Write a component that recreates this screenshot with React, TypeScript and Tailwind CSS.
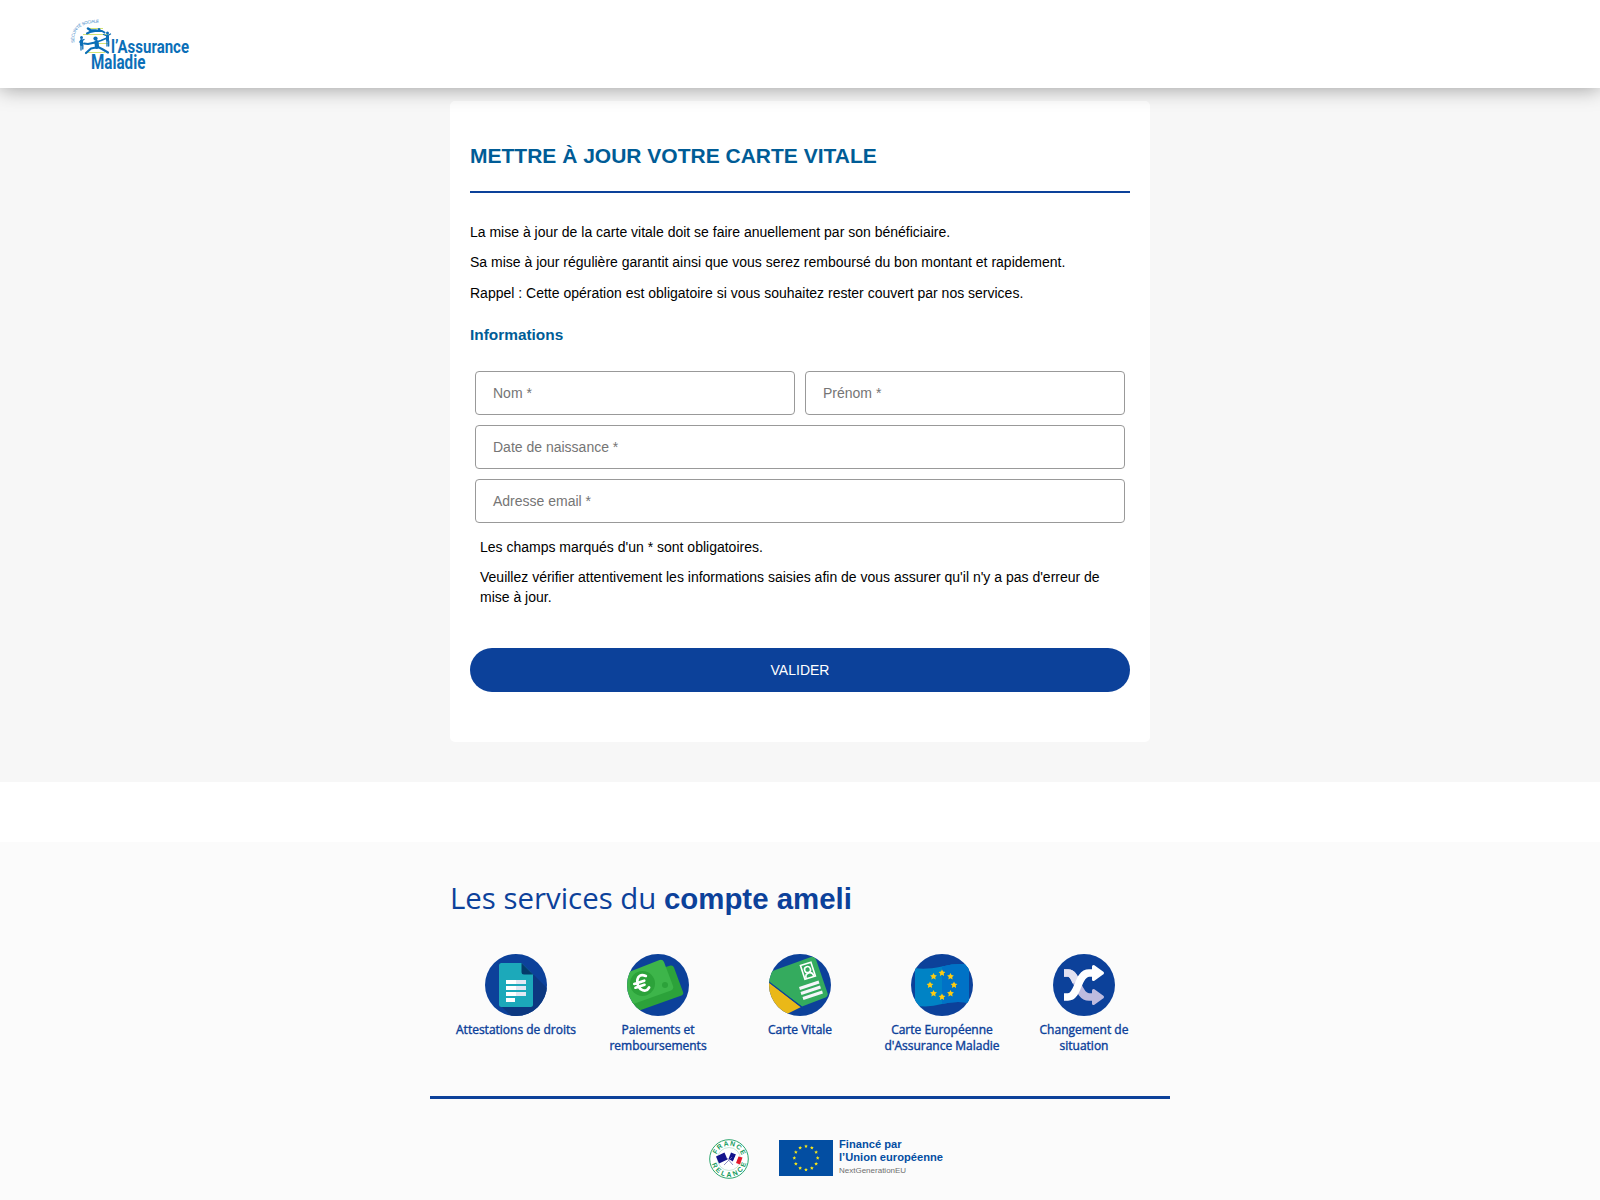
import type { ReactNode } from 'react';

function starPoints(cx: number, cy: number, r: number) {
  return Array.from({ length: 10 }, (_, i) => {
    const a = (Math.PI * i) / 5 - Math.PI / 2;
    const d = i % 2 ? r * 0.5 : r;
    return `${(cx + d * Math.cos(a)).toFixed(2)},${(cy + d * Math.sin(a)).toFixed(2)}`;
  }).join(' ');
}

function Stars({ n, cx, cy, ring, r, fill }: { n: number; cx: number; cy: number; ring: number; r: number; fill: string }) {
  return (
    <g fill={fill}>
      {Array.from({ length: n }, (_, i) => {
        const a = (2 * Math.PI * i) / n - Math.PI / 2;
        return <polygon key={i} points={starPoints(cx + ring * Math.cos(a), cy + ring * Math.sin(a), r)} />;
      })}
    </g>
  );
}

function Logo() {
  return (
    <svg className="ml-[68px] h-[60px] w-[126px]" viewBox="68 14 126 60">
      <defs>
        <path id="logo-arc" d="M74.6 42.5 C72.500 31 80 21.500 101 22.800" />
      </defs>
      <text fill="#3a86c8" fontSize="4.3" fontFamily="Liberation Sans, sans-serif">
        <textPath href="#logo-arc" textLength="37">SÉCURITÉ SOCIALE</textPath>
      </text>
      <g stroke="#c9dc52" strokeWidth="0.8" fill="none">
        <path d="M88 28.5H103M83 34.5H108M83 43.500H109M85 52.5H105" />
      </g>
      <g fill="none" stroke="#0b6fb8" strokeLinecap="round" strokeLinejoin="round">
        <path d="M84 43.500L88 44L95 42.500L101 40.500L107 38" strokeWidth="1.800" />
        <path d="M96.500 42L97 47" strokeWidth="4.200" />
        <path d="M96 47.500L91 48.500L86 53M98 47L102 49L108 52.500" strokeWidth="2.200" />
        <path d="M87 33.500L90 32L95 31L102 31L104.500 32.500" strokeWidth="2" />
        <path d="M88 28.500L91 30.500L96 30.500" strokeWidth="2.600" />
        <path d="M81.500 40.500V44.500" strokeWidth="3.200" />
        <path d="M81 45V50M82.800 45V49M79.500 42L84 39.500" strokeWidth="1.300" />
        <path d="M107.500 36V40" strokeWidth="3" />
        <path d="M107 41V46M108.700 41V46M103.500 34.500L107 36L110.500 34" strokeWidth="1.300" />
      </g>
      <g fill="#0b6fb8">
        <circle cx="95.500" cy="38.500" r="2.100" />
        <circle cx="81.500" cy="37.500" r="1.500" />
        <circle cx="107.500" cy="33" r="1.500" />
        <circle cx="99" cy="29.500" r="1.500" />
      </g>
      <g fill="#0b6fb8" fontFamily="Roboto, sans-serif" fontWeight="700">
        <text transform="translate(111 52.700) scale(0.815 1)" fontSize="18" textLength="95.700" lengthAdjust="spacingAndGlyphs">l’Assurance</text>
        <text transform="translate(91 69.300) scale(0.800 1)" fontSize="19.300" textLength="68" lengthAdjust="spacingAndGlyphs">Maladie</text>
      </g>
    </svg>
  );
}

function Disc({ id, children }: { id: string; children: ReactNode }) {
  return (
    <svg className="size-[62px]" viewBox="0 0 62 62">
      <clipPath id={id}>
        <circle cx="31" cy="31" r="31" />
      </clipPath>
      <g clipPath={`url(#${id})`}>
        <rect width="62" height="62" fill="#0c419a" />
        {children}
      </g>
    </svg>
  );
}

const services = [
  {
    label: 'Attestations de droits',
    icon: (
      <Disc id="disc-doc">
        <path d="M46 18 L64 36 V64 H28 L16 52Z" fill="#0c3880" />
        <path d="M16.500 9H36.500L48 20.500V50.500Q48 53 45.500 53H16.500Q14 53 14 50.500V11.500Q14 9 16.500 9Z" fill="#1ca9ba" />
        <path d="M36.500 9L48 20.500H39Q36.500 20.500 36.500 18Z" fill="#043b6b" />
        <path d="M21 26H41V30H21ZM21 32H41V36H21ZM21 38H41V42H21ZM21 44H30V48H21Z" fill="#fff" />
        <path d="M31 26H41V30H31ZM31 32H41V36H31ZM31 38H41V42H31Z" fill="#e3e8f3" />
      </Disc>
    ),
  },
  {
    label: 'Paiements et remboursements',
    icon: (
      <Disc id="disc-money">
        <path d="M-2 55L37 13.500L43.500 11.500Q46 11 47 13.500L56 38Q57 40.500 54.500 41.500L11 57Z" fill="#2ca23a" />
        <path d="M-2 19.500L32.500 6Q35.500 5 37 8L46 32Q47 35 44 36.500L-2 53Z" fill="#3db54a" />
        <circle cx="15.500" cy="29.500" r="12.500" fill="#2ca23a" />
        <circle cx="38" cy="31" r="3" fill="#2ca23a" />
        <g transform="rotate(-18 15 29.500)" fill="none" stroke="#fff" strokeWidth="2.700" strokeLinecap="round">
          <path d="M21 23.500Q15 18.500 11.500 25Q9.500 30 12 34.500Q16 39.500 20.500 35.500M7.500 27.500H18M7.500 31.500H17" />
        </g>
      </Disc>
    ),
  },
  {
    label: 'Carte Vitale',
    icon: (
      <Disc id="disc-card">
        <path d="M-2 27L32 53L14 62H-2Z" fill="#eab818" />
        <path d="M-2 19L42 3Q45.500 2 47 5.500L58.500 39Q59.500 42 56.500 43.500L33 52.500L-2 27Z" fill="#34ab5e" />
        <path d="M-2 26.500L32.500 53" stroke="#0c419a" strokeWidth="1.200" />
        <g transform="rotate(-18 39 17)" fill="none" stroke="#fff" strokeWidth="1.600">
          <rect x="33.500" y="9.500" width="11" height="14.500" />
          <circle cx="39" cy="15.500" r="3" />
          <path d="M35 23.500Q35 19 39 19Q43 19 43 23.500" />
        </g>
        <path d="M30.500 34.500L50 28M32 39.500L51.500 33M34 44.500L53.500 38" stroke="#f4f6fa" strokeWidth="3" />
      </Disc>
    ),
  },
  {
    label: "Carte Européenne d'Assurance Maladie",
    icon: (
      <Disc id="disc-eu">
        <path d="M4 14Q14 16 31 12.500Q45 9 58 10.500V49Q45 46.500 31 50Q17 54 4 51.500Z" fill="#0083c5" />
        <path d="M31 12.500Q45 9 58 10.500V49Q45 46.500 31 50Z" fill="#0072c6" />
        <Stars n={8} cx={31} cy={31} ring={12} r={3.6} fill="#fdcb10" />
      </Disc>
    ),
  },
  {
    label: 'Changement de situation',
    icon: (
      <Disc id="disc-swap">
        <g fill="none" stroke="#bebbdf" strokeWidth="7.500">
          <path d="M11 19H15C25 19 24 43 36 43H41" />
          <path d="M40.500 36.500L49.500 43L40.500 49.500Z" fill="#bebbdf" strokeWidth="3" strokeLinejoin="round" />
        </g>
        <path d="M11 19H15C19 19 21 23 23 28" fill="none" stroke="#e2e1f1" strokeWidth="7.500" />
        <g fill="none" stroke="#fff" strokeWidth="7.500">
          <path d="M11 43H15C26 43 24 19 36 19H41" />
          <path d="M40.500 12.500L49.500 19L40.500 25.500Z" fill="#fff" strokeWidth="3" strokeLinejoin="round" />
        </g>
      </Disc>
    ),
  },
];

function Field({ label }: { label: string }) {
  return (
    <div className="flex h-11 flex-1 items-center rounded-[4px] border border-[#999] px-[17px] text-[14px] text-[#757575]">
      {label}
    </div>
  );
}

function RelanceBadge() {
  return (
    <svg className="size-10" viewBox="0 0 40 40">
      <defs>
        <path id="relance-top" d="M6.800 20A13.200 13.200 0 0 1 33.200 20" />
        <path id="relance-bottom" d="M2.300 20A17.700 17.700 0 0 0 37.700 20" />
      </defs>
      <circle cx="20" cy="20" r="19.300" fill="#fff" stroke="#2ba56d" strokeWidth="1" />
      <circle cx="20" cy="20" r="11.500" fill="none" stroke="#a5d8bf" strokeWidth="0.600" />
      <g fill="#169b5c" fontFamily="Liberation Sans, sans-serif" fontSize="6.800" fontWeight="700">
        <text><textPath href="#relance-top" startOffset="4.500" textLength="33">FRANCE</textPath></text>
        <text><textPath href="#relance-bottom" startOffset="5" textLength="46">RELANCE</textPath></text>
      </g>
      <path d="M7 17.500L15.500 13.500L18.500 20.500L10 24.500Z" fill="#14148c" />
      <path d="M22 13.500L27 15.500L24 22.500L19.500 20Z" fill="#14148c" />
      <path d="M27 15.500L30 17L27 24L24 22.500Z" fill="#fff" />
      <path d="M29.500 17.500L33.500 18.500L31 25.500L27 24Z" fill="#e3192b" />
      <path d="M15 26L23 18M17 18L24 26" stroke="#7773b4" strokeWidth="0.800" />
    </svg>
  );
}

export default function App() {
  return (
    <div className="h-[1200px] overflow-hidden bg-white font-[Arial,'Liberation_Sans',sans-serif] text-[14px] leading-5 text-black">
      <header className="relative z-10 flex h-[88px] items-center bg-white shadow-[0_0_20px_rgba(0,0,0,0.4)]">
        <Logo />
      </header>

      <main className="h-[694px] bg-[#f7f7f7] pt-[13px]">
        <section className="mx-auto h-[641px] w-[700px] rounded-[5px] bg-white px-5 pt-10">
          <h1 className="text-[21px] leading-[30px] font-bold text-[#005c96]">METTRE À JOUR VOTRE CARTE VITALE</h1>
          <div className="mt-5 h-[2px] bg-[#0c419a]" />
          <div className="mt-[29px] flex flex-col gap-[10.400px]">
            <p>La mise à jour de la carte vitale doit se faire anuellement par son bénéficiaire.</p>
            <p>Sa mise à jour régulière garantit ainsi que vous serez remboursé du bon montant et rapidement.</p>
            <p>Rappel : Cette opération est obligatoire si vous souhaitez rester couvert par nos services.</p>
          </div>
          <h2 className="mt-[22.200px] text-[15.400px] leading-5 font-bold text-[#005c96]">Informations</h2>
          <div className="mt-[26px] flex flex-col gap-[10px] px-[5px]">
            <div className="flex gap-[10px]">
              <Field label="Nom *" />
              <Field label="Prénom *" />
            </div>
            <div className="flex"><Field label="Date de naissance *" /></div>
            <div className="flex"><Field label="Adresse email *" /></div>
          </div>
          <div className="mt-[14px] flex flex-col gap-[10px] px-[10px]">
            <p>Les champs marqués d'un * sont obligatoires.</p>
            <p>Veuillez vérifier attentivement les informations saisies afin de vous assurer qu'il n'y a pas d'erreur de mise à jour.</p>
          </div>
          <div className="mt-[41px] flex h-11 items-center justify-center rounded-full bg-[#0c419a] text-white">VALIDER</div>
        </section>
      </main>

      <footer className="mt-[60px] h-[358px] bg-[#fbfbfb] pt-9">
        <div className="mx-auto w-[700px]">
          <h2 className="text-[29.400px] leading-10 text-[#0c419a]">
            <span className="font-['Open_Sans',sans-serif]">Les services du </span>
            <b>compte ameli</b>
          </h2>
          <div className="-mx-[5px] mt-[35px] flex h-[104px]">
            {services.map((s) => (
              <div key={s.label} className="flex w-[142px] flex-col items-center px-2">
                {s.icon}
                <p className="mt-1.5 text-center font-['Open_Sans',sans-serif] text-[12px] leading-4 text-[#0c419a] [-webkit-text-stroke:0.4px_#0c419a]">
                  {s.label}
                </p>
              </div>
            ))}
          </div>
        </div>
        <div className="mx-auto mt-[38px] h-[3px] w-[740px] bg-[#0c419a]" />
        <div className="mt-10 ml-[709px] flex">
          <RelanceBadge />
          <svg className="mt-px ml-[30px] h-9 w-[54px]" viewBox="0 0 54 36">
            <rect width="54" height="36" fill="#034ea2" />
            <Stars n={12} cx={27} cy={18} ring={11.7} r={1.9} fill="#f5e51b" />
          </svg>
          <div className="-mt-px ml-[6px] text-[11.150px] leading-[13px] font-bold text-[#034ea2]">
            <p>Financé par</p>
            <p>l’Union européenne</p>
            <p className="text-[8px] font-normal text-[#6f6f6f]">NextGenerationEU</p>
          </div>
        </div>
      </footer>
    </div>
  );
}
